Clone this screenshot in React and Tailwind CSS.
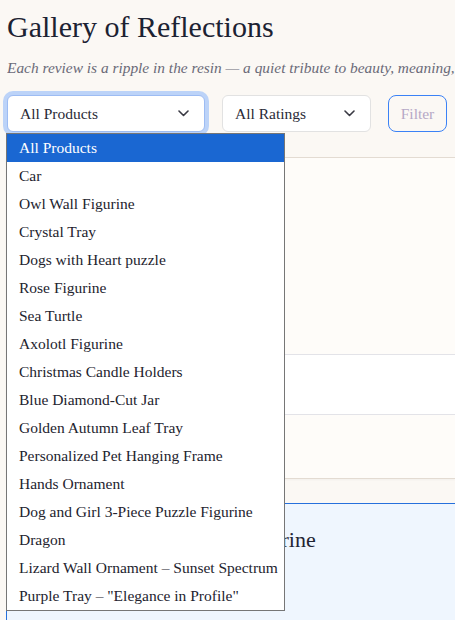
import React from "react";

const products = [
  "All Products",
  "Car",
  "Owl Wall Figurine",
  "Crystal Tray",
  "Dogs with Heart puzzle",
  "Rose Figurine",
  "Sea Turtle",
  "Axolotl Figurine",
  "Christmas Candle Holders",
  "Blue Diamond-Cut Jar",
  "Golden Autumn Leaf Tray",
  "Personalized Pet Hanging Frame",
  "Hands Ornament",
  "Dog and Girl 3-Piece Puzzle Figurine",
  "Dragon",
  "Lizard Wall Ornament – Sunset Spectrum",
  'Purple Tray – "Elegance in Profile"',
];

function Chevron() {
  return (
    <svg width="11" height="7" viewBox="0 0 11 7" fill="none" className="shrink-0">
      <path d="M1 1L5.5 5.5L10 1" stroke="#3a3a44" strokeWidth="1.6" strokeLinecap="round" strokeLinejoin="round" />
    </svg>
  );
}

export default function App() {
  return (
    <div
      className="h-[620px] overflow-hidden bg-[#fbf8f4] text-[#1f2433]"
      style={{ fontFamily: '"Liberation Serif", "Times New Roman", serif' }}
    >
      <div className="pl-[7px] pt-[9px]">
        <h1 className="h-[36px] text-[30px] leading-[36px] font-normal whitespace-nowrap text-[#1c2232]">
          Gallery of Reflections
        </h1>
        <p className="mt-[13px] h-[20px] overflow-hidden text-[15.4px] leading-[20px] italic whitespace-nowrap text-[#6a6a78]">
          Each review is a ripple in the resin — a quiet tribute to beauty, meaning, and memory.
        </p>

        {/* Filters */}
        <div className="relative mt-[17px] flex items-center gap-[17px]">
          <div className="flex h-[37px] w-[198px] items-center justify-between rounded-md border border-[#9dbcf3] bg-white pl-[12px] pr-[15px] text-[15.5px] text-[#2a2a36] ring-4 ring-[#bcd3f8]">
            <span>All Products</span>
            <Chevron />
          </div>
          <div className="flex h-[37px] w-[149px] items-center justify-between rounded-md border border-[#e2e2e2] bg-white pl-[12px] pr-[15px] text-[15.5px] text-[#2a2a36]">
            <span>All Ratings</span>
            <Chevron />
          </div>
          <button className="h-[37px] w-[59px] rounded-lg border-[1.5px] border-[#3b82f6] bg-transparent text-[15.5px] text-[#b6a8c6]">
            Filter
          </button>

          {/* open native list */}
          <div className="absolute left-[-1px] top-[38px] z-10 w-[279px] border border-[#767676] bg-white">
            {products.map((p, i) => (
              <div
                key={i}
                className={
                  i === 0
                    ? "h-[28px] whitespace-nowrap bg-[#1a67d2] pl-[12px] text-[15.5px] leading-[28px] text-white"
                    : "h-[28px] whitespace-nowrap pl-[12px] text-[15.5px] leading-[28px] text-[#23232e]"
                }
              >
                {p}
              </div>
            ))}
          </div>
        </div>

        {/* Review table */}
        <div className="-ml-px mt-[25px] border-t border-b border-[#e3dbd2] bg-[#fefcf9] shadow-[0_1px_2px_rgba(0,0,0,0.04)]">
          <div className="h-[197px] border-b border-[#e3e3e8] bg-[#fefcf9]" />
          <div className="h-[60px] border-b border-[#e3e3e8] bg-white" />
          <div className="h-[63px] bg-[#fefcf9]" />
        </div>

        {/* Featured review */}
        <div className="-ml-px mt-[24px] h-[200px] border-l border-t border-[#2670dc] bg-[#eff6fe] pl-[20px] pt-[22px]">
          <h3 className="text-[22px] leading-[28px] whitespace-nowrap text-[#1f2433]">
            Crystal Owl Resin Wall Figurine
          </h3>
          <p className="mt-[38px] text-[15px] leading-[20px] text-[#555]">“A keepsake, truly,” she said.</p>
        </div>
      </div>
    </div>
  );
}
